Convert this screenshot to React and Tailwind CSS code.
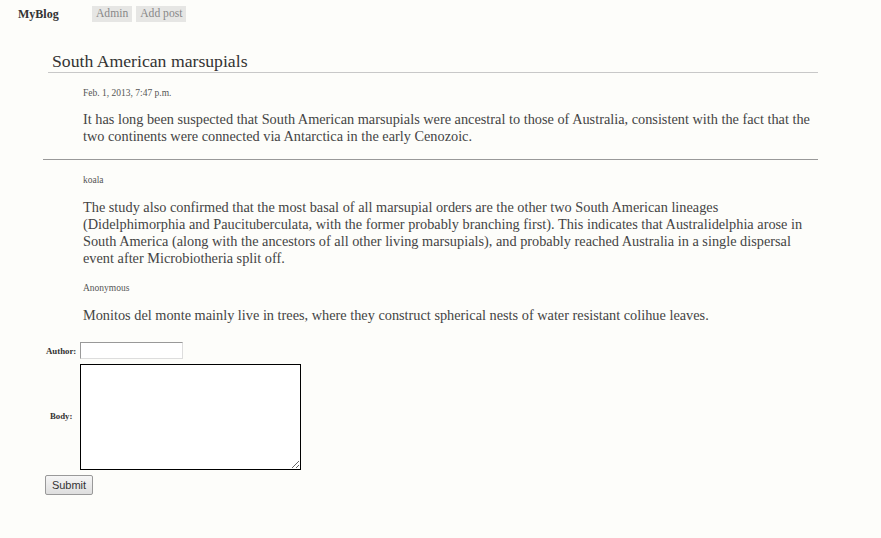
import React from 'react';

const serif = { fontFamily: '"Liberation Serif", "Times New Roman", serif' };

const comments = [
  {
    author: 'koala',
    body: 'The study also confirmed that the most basal of all marsupial orders are the other two South American lineages (Didelphimorphia and Paucituberculata, with the former probably branching first). This indicates that Australidelphia arose in South America (along with the ancestors of all other living marsupials), and probably reached Australia in a single dispersal event after Microbiotheria split off.',
  },
  {
    author: 'Anonymous',
    body: 'Monitos del monte mainly live in trees, where they construct spherical nests of water resistant colihue leaves.',
  },
];

const App = () => {
  return (
    <div className="min-h-[538px] bg-[#fdfdfa] text-[#444] font-['Liberation_Serif',serif]">
      {/* header */}
      <div className="flex items-center h-[28px] pl-[18px]">
        <span className="w-[74px] text-[12px] font-bold text-[#333]">MyBlog</span>
        <a className="bg-[#e6e6e4] text-[#888] text-[11.6px] leading-[16px] px-[4px] mr-[4px]">Admin</a>
        <a className="bg-[#e6e6e4] text-[#888] text-[11.6px] leading-[16px] px-[4px]">Add post</a>
      </div>

      <div className="ml-[43px] w-[775px] mt-[22px]">
        <h2 className="ml-[5px] pl-[4px] text-[17.7px] leading-[22px] text-[#333] border-b border-[#c8c8c8]">
          South American marsupials
        </h2>
        <div className="pl-[40px] pt-[15px]">
          <div className="text-[9.5px] leading-[11px] text-[#555]">Feb. 1, 2013, 7:47 p.m.</div>
          <p className="mt-[12px] text-[14.3px] leading-[17px]">
            It has long been suspected that South American marsupials were ancestral to those of Australia, consistent with the fact that the two continents were connected via Antarctica in the early Cenozoic.
          </p>
        </div>
        <div className="mt-[14px] border-t border-[#999]" />

        <div className="pl-[40px] pt-[15px]">
          {comments.map((c, i) => (
            <div key={c.author} className={i === 0 ? 'mb-[16px]' : ''}>
              <div className="text-[9.5px] leading-[11px] text-[#555]">{c.author}</div>
              <p className="mt-[13px] text-[14.3px] leading-[17px]">{c.body}</p>
            </div>
          ))}
        </div>
      </div>

      {/* comment form */}
      <form className="ml-[43px] mt-[16px]" style={serif}>
        <table className="border-separate border-spacing-x-[2px] border-spacing-y-[2px]">
          <tbody>
            <tr>
              <th className="text-right align-middle text-[8.8px] font-bold text-[#333] pl-[1px] pr-[2px]">Author:</th>
              <td>
                <input className="block w-[103px] h-[17px] mb-[3px] bg-white border border-[#999] border-r-[#ddd] border-b-[#ddd]" />
              </td>
            </tr>
            <tr>
              <th className="text-center align-middle text-[8.8px] font-bold text-[#333] pl-[1px] pr-[2px]">Body:</th>
              <td>
                <textarea className="block w-[221px] h-[106px] bg-white border border-black" />
              </td>
            </tr>
          </tbody>
        </table>
        <button
          type="button"
          className="ml-[2px] mt-[2px] w-[48px] h-[20px] text-[11px] text-[#333] border border-[#999] rounded-[2px] bg-gradient-to-b from-[#f6f6f6] to-[#dedede] font-['Liberation_Sans',sans-serif]"
        >
          Submit
        </button>
      </form>
    </div>
  );
};

export default App;
